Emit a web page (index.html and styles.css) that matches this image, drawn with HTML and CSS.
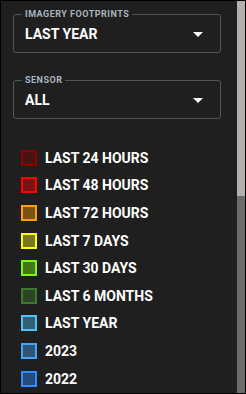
FILE: index.html
```html
<!DOCTYPE html>
<html lang="en">
<head>
    <meta charset="UTF-8">
    <meta name="viewport" content="width=device-width, initial-scale=1.0">
    <title>Imagery Footprints</title>
    <link rel="stylesheet" href="styles.css">
</head>
<body>

    <div class="panel">
        <!-- Filters -->
        <fieldset class="dropdown">
            <legend>IMAGERY FOOTPRINTS</legend>
            <div class="dropdown-value">
                <span>LAST YEAR</span>
                <span class="caret"></span>
            </div>
        </fieldset>

        <fieldset class="dropdown">
            <legend>SENSOR</legend>
            <div class="dropdown-value">
                <span>ALL</span>
                <span class="caret"></span>
            </div>
        </fieldset>

        <!-- Colour legend -->
        <ul class="legend">
            <li><span class="swatch c-24h"></span>LAST 24 HOURS</li>
            <li><span class="swatch c-48h"></span>LAST 48 HOURS</li>
            <li><span class="swatch c-72h"></span>LAST 72 HOURS</li>
            <li><span class="swatch c-7d"></span>LAST 7 DAYS</li>
            <li><span class="swatch c-30d"></span>LAST 30 DAYS</li>
            <li><span class="swatch c-6m"></span>LAST 6 MONTHS</li>
            <li><span class="swatch c-1y"></span>LAST YEAR</li>
            <li><span class="swatch c-2023"></span>2023</li>
            <li><span class="swatch c-2022"></span>2022</li>
        </ul>
    </div>

    <div class="scrollbar">
        <div class="scrollbar-thumb"></div>
    </div>

</body>
</html>
```

FILE: styles.css
```css
html, body {
    margin: 0;
    height: 100%;
}

body {
    font-family: Roboto, "Liberation Sans", sans-serif;
    background-color: #1f1f1f;
    color: #fff;
    border: 1px solid #000;
    box-sizing: border-box;
    display: flex;
    overflow: hidden;
}

.panel {
    flex: 1;
    padding-top: 8px;
}

.dropdown {
    width: 208px;
    box-sizing: border-box;
    margin: 0 0 22px 12px;
    padding: 0 8px 10px 8px;
    border: 1px solid #555;
    border-radius: 3px;
}

.dropdown legend {
    padding: 0 3px;
    font-size: 9px;
    line-height: 11px;
    font-weight: 700;
    letter-spacing: 0.5px;
    color: #a9b6bf;
}

.dropdown-value {
    display: flex;
    align-items: center;
    justify-content: space-between;
    margin-top: 6px;
    padding: 0 9px 0 3px;
    font-size: 14px;
    line-height: 16px;
    font-weight: 700;
}

.caret {
    width: 0;
    height: 0;
    border-left: 5px solid transparent;
    border-right: 5px solid transparent;
    border-top: 5px solid #fff;
}

.legend {
    list-style: none;
    margin: 0;
    padding: 3px 0 0 20px;
}

.legend li {
    display: flex;
    align-items: center;
    gap: 8px;
    height: 27.6px;
    font-size: 14px;
    font-weight: 700;
}

.swatch {
    width: 16px;
    height: 16px;
    box-sizing: border-box;
    border: 2px solid var(--c);
    background-color: color-mix(in srgb, var(--c) 40%, #1f1f1f);
}

.c-24h { --c: #8b0000; }
.c-48h { --c: #ff0000; }
.c-72h { --c: #ffa000; }
.c-7d { --c: #ffff00; }
.c-30d { --c: #7cfc00; }
.c-6m { --c: #3b7a2e; }
.c-1y { --c: #4fc3f7; }
.c-2023 { --c: #42a5f5; }
.c-2022 { --c: #2f8cff; }

.scrollbar {
    width: 8px;
    background-color: #6e6c68;
}

.scrollbar-thumb {
    height: 195px;
    background-color: #b3afaa;
}
```
